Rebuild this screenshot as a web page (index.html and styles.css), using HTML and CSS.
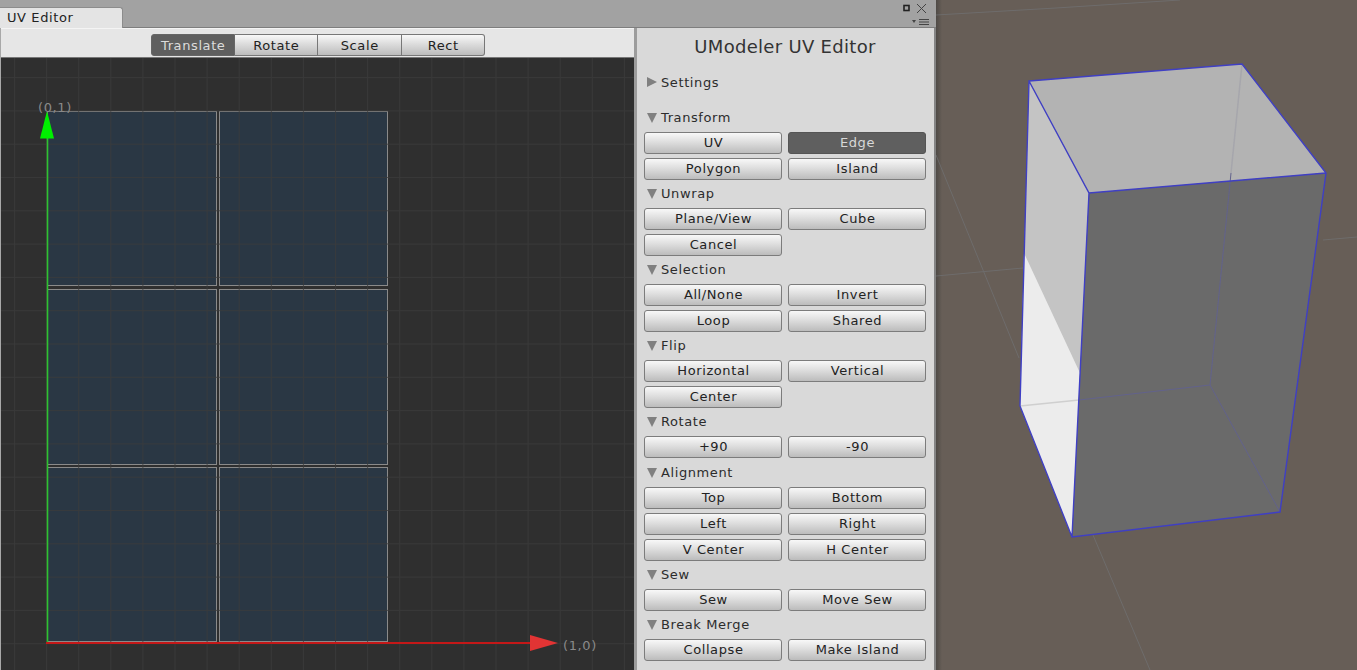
FILE: index.html
```html
<!DOCTYPE html>
<html lang="en">
<head>
	<meta charset="UTF-8">
	<title>UV Editor</title>
	<link rel="stylesheet" href="styles.css">
</head>
<body>
	<div class="window">
		<div class="tabbar">
			<div class="tab">UV Editor</div>
			<div class="winbtns">
				<svg width="30" height="26" viewBox="0 0 30 26">
					<rect x="3" y="3.500" width="5" height="5" fill="none" stroke="#222" stroke-width="1.600"/>
					<path d="M16 2l9 9M25 2l-9 9" stroke="#444" stroke-width="1"/>
					<path d="M11 18h4l-2 3z" fill="#444"/>
					<path d="M18 17.500h10M18 20h10M18 22.500h10" stroke="#444" stroke-width="1"/>
				</svg>
			</div>
		</div>
		<div class="main">
			<div class="leftpane">
				<div class="toolbar">
					<div class="modes">
						<div class="mode on">Translate</div>
						<div class="mode">Rotate</div>
						<div class="mode">Scale</div>
						<div class="mode">Rect</div>
					</div>
				</div>
				<div class="canvas">
					<svg width="633" height="612" viewBox="1 58 633 612">
						<defs>
							<pattern id="grid" width="32.1" height="33.3" patternUnits="userSpaceOnUse" x="14" y="10.500">
								<path d="M0.500 0V33.3M0 0.500H32.100" stroke="#3b3b3b" stroke-width="1" fill="none"/>
							</pattern>
						</defs>
						<rect x="0" y="58" width="634" height="612" fill="#2f2f2f"/>
						<g fill="#2a3744" stroke="#8a8a8a" stroke-width="1">
							<rect x="47.500" y="111.500" width="169" height="174"/>
							<rect x="219.500" y="111.500" width="168" height="174"/>
							<rect x="47.500" y="289.500" width="169" height="175"/>
							<rect x="219.500" y="289.500" width="168" height="175"/>
							<rect x="47.500" y="467.500" width="169" height="174"/>
							<rect x="219.500" y="467.500" width="168" height="174"/>
						</g>
						<rect x="0" y="58" width="634" height="612" fill="url(#grid)" opacity="0.8"/>
						<path d="M47.500 138V642" stroke="#2fc22f" stroke-width="1.600"/>
						<path d="M47 111l7 27.500h-14z" fill="#00f000"/>
						<path d="M46 643H532" stroke="#c41818" stroke-width="1.800"/>
						<path d="M530 635l28 8-28 8z" fill="#e23434"/>
						<text class="axis" x="38" y="112">(0,1)</text>
						<text class="axis" x="563" y="650">(1,0)</text>
					</svg>
				</div>
			</div>
			<div class="panel">
				<h1 class="title">UModeler UV Editor</h1>
				<div class="head closed settings"><span class="arrow"></span>Settings</div>
				<div class="head first"><span class="arrow"></span>Transform</div>
				<div class="row"><div class="btn">UV</div><div class="btn on">Edge</div></div>
				<div class="row"><div class="btn">Polygon</div><div class="btn">Island</div></div>
				<div class="head"><span class="arrow"></span>Unwrap</div>
				<div class="row"><div class="btn">Plane/View</div><div class="btn">Cube</div></div>
				<div class="row"><div class="btn">Cancel</div></div>
				<div class="head"><span class="arrow"></span>Selection</div>
				<div class="row"><div class="btn">All/None</div><div class="btn">Invert</div></div>
				<div class="row"><div class="btn">Loop</div><div class="btn">Shared</div></div>
				<div class="head"><span class="arrow"></span>Flip</div>
				<div class="row"><div class="btn">Horizontal</div><div class="btn">Vertical</div></div>
				<div class="row"><div class="btn">Center</div></div>
				<div class="head"><span class="arrow"></span>Rotate</div>
				<div class="row"><div class="btn">+90</div><div class="btn">-90</div></div>
				<div class="head tall"><span class="arrow"></span>Alignment</div>
				<div class="row"><div class="btn">Top</div><div class="btn">Bottom</div></div>
				<div class="row"><div class="btn">Left</div><div class="btn">Right</div></div>
				<div class="row"><div class="btn">V Center</div><div class="btn">H Center</div></div>
				<div class="head"><span class="arrow"></span>Sew</div>
				<div class="row"><div class="btn">Sew</div><div class="btn">Move Sew</div></div>
				<div class="head"><span class="arrow"></span>Break Merge</div>
				<div class="row"><div class="btn">Collapse</div><div class="btn">Make Island</div></div>
			</div>
		</div>
	</div>
	<div class="scene">
		<svg width="421" height="670" viewBox="936 0 421 670">
			<defs>
				<linearGradient id="edge">
					<stop offset="0" stop-color="#4e4a46"/>
					<stop offset="1" stop-color="#675e57"/>
				</linearGradient>
			</defs>
			<rect x="936" y="0" width="421" height="670" fill="#675e57"/>
			<rect x="936" y="0" width="6" height="670" fill="url(#edge)"/>
			<g stroke="#73767a" stroke-width="1" fill="none" opacity="0.6">
				<path d="M936 155L1019 358"/>
				<path d="M936 276L1023 268"/>
				<path d="M936 15L1056 8L1180 0"/>
				<path d="M1323 240L1357 237"/>
				<path d="M1093 535L1150 670"/>
			</g>
			<polygon points="1029,81 1242,64 1326,173 1089,193" fill="#b3b3b3"/>
			<polygon points="1029,81 1089,193 1079,400 1072,537 1020,406" fill="#c4c4c4"/>
			<polygon points="1024,253 1080,373 1079,400 1072,537 1020,406" fill="#ececec"/>
			<polygon points="1089,193 1326,173 1280,512 1072,537" fill="#6a6a6a"/>
			<path d="M1242 64L1231 173" stroke="#a6a6ac" stroke-width="1.500" fill="none"/>
			<path d="M1020 406L1079 400" stroke="#cfcfcf" stroke-width="1.500" fill="none"/>
			<path d="M1231 173L1210 385L1280 512M1210 385L1079 400" stroke="#62628c" stroke-width="1" fill="none"/>
			<path d="M1029 81L1242 64L1326 173L1280 512L1072 537L1020 406ZM1029 81L1089 193L1326 173M1089 193L1072 537" stroke="#3f3fc4" stroke-width="1.400" fill="none"/>
		</svg>
	</div>
</body>
</html>
```

FILE: styles.css
```css
*{margin:0;padding:0;box-sizing:border-box;}
html,body{height:670px;overflow:hidden;}
body{display:flex;width:1357px;font-family:"DejaVu Sans","Liberation Sans",sans-serif;font-size:13px;color:#222;background:#a2a2a2;}

.window{width:936px;height:670px;display:flex;flex-direction:column;background:#a2a2a2;flex:none;}
.tabbar{height:28px;display:flex;justify-content:space-between;border-bottom:1px solid #7e7e7e;flex:none;}
.tab{width:123px;height:21px;margin-top:7px;padding-left:7px;line-height:20px;background:#e4e4e4;border:1px solid #8c8c8c;border-bottom:none;border-left:none;border-radius:0 3px 0 0;letter-spacing:.6px;}
.winbtns{padding:2px 5px 0 0;}
.winbtns svg{display:block;}

.main{flex:1;display:flex;min-height:0;}
.leftpane{width:637px;display:flex;flex-direction:column;border-left:1px solid #a8a8a8;border-right:3px solid #9c9c9c;flex:none;}
.toolbar{height:30px;display:flex;justify-content:center;align-items:flex-start;padding:5px 0 0 1px;background:#e6e6e6;border-top:1px solid #f4f4f4;border-bottom:1px solid #777;flex:none;}
.modes{display:flex;height:22px;}
.mode{width:83.500px;padding-left:1px;line-height:21px;text-align:center;letter-spacing:.6px;background:linear-gradient(#f8f8f8,#dcdcdc 45%,#bcbcbc);border:1px solid #777;border-left:none;}
.mode:last-child{border-radius:0 3px 3px 0;}
.mode.on{color:#dcdcdc;background:#5f5f5f;border:1px solid #666;border-radius:3px 0 0 3px;}
.canvas{flex:1;min-height:0;}
.canvas svg{display:block;}
.axis{font-family:"DejaVu Sans","Liberation Sans",sans-serif;font-size:13px;letter-spacing:.6px;fill:#8a8a8a;}

.panel{flex:1;display:flex;flex-direction:column;padding:0 8px 0 7px;background:#d9d9d9;border-right:2px solid #858585;}
.title{height:39px;line-height:38px;font-size:18px;font-weight:normal;text-align:center;letter-spacing:.3px;color:#333;}
.head{height:24px;padding:2px 0 0 3px;line-height:16px;letter-spacing:.6px;display:flex;align-items:flex-start;color:#2c2c2c;flex:none;}
.head.settings{height:16px;padding-top:0;margin-top:8px;}
.head.first{margin-top:17px;}
.head.tall{height:25px;padding-top:3px;}
.arrow{width:0;height:0;margin:3px 4px 0 0;border-left:5px solid transparent;border-right:5px solid transparent;border-top:10px solid #808080;}
.closed .arrow{border:5.500px solid transparent;border-left:10px solid #808080;border-right:none;margin:2px 4px 0 0;}

.row{display:flex;justify-content:space-between;height:26px;padding-bottom:4px;flex:none;}
.btn{width:138px;height:22px;padding-left:1px;line-height:20px;text-align:center;letter-spacing:.6px;background:linear-gradient(#f8f8f8,#dedede 45%,#bcbcbc);border:1px solid #7c7c7c;border-radius:3px;}
.btn.on{color:#d8d8d8;background:#5f5f5f;border-color:#555;}

.scene{flex:1;height:670px;}
.scene svg{display:block;}
```
